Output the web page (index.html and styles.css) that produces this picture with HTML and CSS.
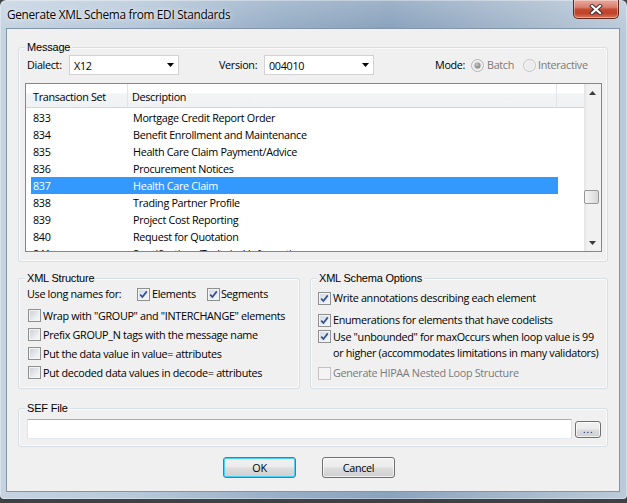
FILE: index.html
```html
<!DOCTYPE html>
<html>
<head>
<meta charset="utf-8">
<link rel="stylesheet" href="styles.css">
</head>
<body>
<div class="window">
  <div class="titlebar">
    <span class="title">Generate XML Schema from EDI Standards</span>
    <div class="close">
      <svg width="14" height="11" viewBox="0 0 14 11"><path d="M3 2 L11 9 M11 2 L3 9" stroke="#3b2b2b" stroke-width="4" stroke-linecap="square"/><path d="M3 2 L11 9 M11 2 L3 9" stroke="#ffffff" stroke-width="2.2" stroke-linecap="square"/></svg>
    </div>
  </div>
  <div class="client">
    <div class="group message">
      <div class="group-title">Message</div>
      <div class="msg-row">
        <span class="lbl lbl-dialect">Dialect:</span>
        <div class="combo"><span>X12</span><svg class="arrow" width="8" height="4" viewBox="0 0 8 4"><path d="M0 0 H7 L3.5 4 Z" fill="#000"/></svg></div>
        <span class="lbl lbl-version">Version:</span>
        <div class="combo"><span>004010</span><svg class="arrow" width="8" height="4" viewBox="0 0 8 4"><path d="M0 0 H7 L3.5 4 Z" fill="#000"/></svg></div>
        <span class="lbl lbl-mode">Mode:</span>
        <svg class="radio" width="13" height="13" viewBox="0 0 13 13"><defs><radialGradient id="rg" cx="0.4" cy="0.35" r="0.7"><stop offset="0" stop-color="#c4c4c4"/><stop offset="1" stop-color="#7f7f7f"/></radialGradient></defs><circle cx="6.5" cy="6.5" r="6" fill="#f2f2f2" stroke="#b4b4b4"/><circle cx="6.5" cy="6.5" r="4.2" fill="#e6e6e6"/><circle cx="6.5" cy="6.5" r="3" fill="url(#rg)"/></svg>
        <span class="lbl dis lbl-batch">Batch</span>
        <svg class="radio" width="13" height="13" viewBox="0 0 13 13"><circle cx="6.5" cy="6.5" r="6" fill="#f2f2f2" stroke="#c4c4c4"/><circle cx="6.5" cy="6.5" r="4.2" fill="#ececec"/></svg>
        <span class="lbl dis lbl-inter">Interactive</span>
      </div>
      <div class="listview">
        <div class="lv-main">
          <div class="lv-header">
            <div class="hc hc1">Transaction Set</div>
            <div class="hc hc2">Description</div>
            <div class="hc hc3"></div>
          </div>
          <div class="lv-rows">
            <div class="row"><span class="c1">833</span><span>Mortgage Credit Report Order</span></div>
            <div class="row"><span class="c1">834</span><span>Benefit Enrollment and Maintenance</span></div>
            <div class="row"><span class="c1">835</span><span>Health Care Claim Payment/Advice</span></div>
            <div class="row"><span class="c1">836</span><span>Procurement Notices</span></div>
            <div class="row sel"><span class="c1">837</span><span>Health Care Claim</span></div>
            <div class="row"><span class="c1">838</span><span>Trading Partner Profile</span></div>
            <div class="row"><span class="c1">839</span><span>Project Cost Reporting</span></div>
            <div class="row"><span class="c1">840</span><span>Request for Quotation</span></div>
            <div class="row"><span class="c1">841</span><span>Specifications/Technical Information</span></div>
          </div>
        </div>
        <div class="vscroll">
          <div class="sb-btn"><svg width="7" height="4" viewBox="0 0 7 4"><path d="M0 4 H7 L3.5 0 Z" fill="#3a3a3a"/></svg></div>
          <div class="sb-track"><div class="sb-thumb"></div></div>
          <div class="sb-btn"><svg width="7" height="4" viewBox="0 0 7 4"><path d="M0 0 H7 L3.5 4 Z" fill="#3a3a3a"/></svg></div>
        </div>
      </div>
    </div>

    <div class="opts">
      <div class="group xmlstruct">
        <div class="group-title">XML Structure</div>
        <div class="longnames">
          <span class="lbl lbl-use">Use long names for:</span>
          <span class="cb on"><svg width="9" height="9" viewBox="0 0 9 9"><path d="M1.2 4.6 L3.4 7 L7.8 1.4" fill="none" stroke="#2f4f94" stroke-width="1.7"/></svg></span>
          <span class="lbl lbl-elem">Elements</span>
          <span class="cb on"><svg width="9" height="9" viewBox="0 0 9 9"><path d="M1.2 4.6 L3.4 7 L7.8 1.4" fill="none" stroke="#2f4f94" stroke-width="1.7"/></svg></span>
          <span class="lbl lbl-seg">Segments</span>
        </div>
        <div class="chk first"><span class="cb"></span><span class="lbl">Wrap with "GROUP" and "INTERCHANGE" elements</span></div>
        <div class="chk"><span class="cb"></span><span class="lbl">Prefix GROUP_N tags with the message name</span></div>
        <div class="chk"><span class="cb"></span><span class="lbl">Put the data value in value= attributes</span></div>
        <div class="chk"><span class="cb"></span><span class="lbl">Put decoded data values in decode= attributes</span></div>
      </div>
      <div class="group schema">
        <div class="group-title">XML Schema Options</div>
        <div class="chk s1"><span class="cb on"><svg width="9" height="9" viewBox="0 0 9 9"><path d="M1.2 4.6 L3.4 7 L7.8 1.4" fill="none" stroke="#2f4f94" stroke-width="1.7"/></svg></span><span class="lbl">Write annotations describing each element</span></div>
        <div class="chk s2"><span class="cb on"><svg width="9" height="9" viewBox="0 0 9 9"><path d="M1.2 4.6 L3.4 7 L7.8 1.4" fill="none" stroke="#2f4f94" stroke-width="1.7"/></svg></span><span class="lbl">Enumerations for elements that have codelists</span></div>
        <div class="chk s3"><span class="cb on"><svg width="9" height="9" viewBox="0 0 9 9"><path d="M1.2 4.6 L3.4 7 L7.8 1.4" fill="none" stroke="#2f4f94" stroke-width="1.7"/></svg></span><span class="lbl">Use "unbounded" for maxOccurs when loop value is 99<br>or higher (accommodates limitations in many validators)</span></div>
        <div class="chk s4"><span class="cb disabled"></span><span class="lbl dis">Generate HIPAA Nested Loop Structure</span></div>
      </div>
    </div>

    <div class="group sef">
      <div class="group-title">SEF File</div>
      <div class="sef-row">
        <div class="textbox"></div>
        <div class="btn browse">...</div>
      </div>
    </div>

    <div class="buttons">
      <div class="btn push default">OK</div>
      <div class="btn push">Cancel</div>
    </div>
  </div>
</div>
</body>
</html>
```

FILE: styles.css
```css
* { box-sizing: border-box; }
html, body { margin: 0; padding: 0; }
body {
  width: 627px;
  height: 503px;
  overflow: hidden;
  background: #3f4144;
  font-family: "Open Sans", "Noto Sans", sans-serif;
  font-size: 10.8px;
  letter-spacing: -0.32px;
  color: #000;
}
.window {
  width: 627px;
  height: 499px;
  border-radius: 6px 6px 4px 4px;
  background:
    linear-gradient(180deg, rgba(255,255,255,0.18) 0px, rgba(255,255,255,0) 28px),
    linear-gradient(90deg, #c6d4e2 0%, #b6c8da 22%, #97aec6 45%, #8aa3bd 62%, #a4b7cb 82%, #bccbda 100%);
  padding: 0 7px 7px 6px;
  display: flex;
  flex-direction: column;
  box-shadow: inset 0 0 0 1px rgba(255,255,255,0.35);
}
.titlebar {
  height: 28px;
  display: flex;
  align-items: flex-start;
  justify-content: space-between;
}
.title {
  margin: 6px 0 0 1px;
  font-size: 11.8px;
  line-height: 16px;
  letter-spacing: -0.3px;
  color: #000;
  text-shadow: 0 0 6px rgba(255,255,255,0.9), 0 0 2px rgba(255,255,255,0.8);
}
.close {
  width: 46px;
  height: 19px;
  margin-right: 1px;
  border: 1px solid #5e2a24;
  border-top: none;
  border-radius: 0 0 5px 5px;
  background: linear-gradient(180deg, #e9aa9d 0%, #d9806f 40%, #c44a32 52%, #c0432c 75%, #dc7a55 100%);
  box-shadow: inset 0 0 0 1px rgba(255,255,255,0.35);
  display: flex;
  align-items: center;
  justify-content: center;
}
.client {
  width: 614px;
  height: 464px;
  background: #f0f0f0;
  border: 1px solid #8294a8;
  display: flex;
  flex-direction: column;
}
.group {
  border: 1px solid #d5dfe5;
  border-radius: 3px;
  box-shadow: inset 0 0 0 1px #fbfbfb;
  display: flex;
  flex-direction: column;
}
.group-title {
  align-self: flex-start;
  margin: -8px 0 0 6px;
  padding: 0 2px;
  background: #f0f0f0;
  line-height: 14px;
  font-family: "Liberation Sans", Arial, sans-serif;
  font-size: 11px;
  letter-spacing: -0.2px;
}
.lbl { line-height: 16px; white-space: nowrap; }
.dis { color: #7a7a7a; }

/* Message */
.message { margin: 18px 0 0 11px; width: 590px; height: 215px; }
.msg-row { margin-top: 1px; height: 20px; display: flex; align-items: center; }
.lbl-dialect { margin-left: 8px; width: 42px; }
.lbl-version { margin-left: 40px; width: 45px; }
.lbl-mode { margin-left: 61px; width: 36px; }
.lbl-batch { margin-left: 3px; width: 36px; }
.lbl-inter { margin-left: 2px; }
.combo {
  width: 110px;
  height: 20px;
  background: #fff;
  border: 1px solid #d2d2d2;
  padding-left: 4px;
  display: flex;
  align-items: center;
}
.combo .arrow { margin-left: auto; margin-right: 3px; }
.radio { flex: none; }

.listview {
  margin: 8px 0 0 6px;
  width: 577px;
  height: 169px;
  border: 1px solid #828790;
  background: #fff;
  display: flex;
}
.lv-main { width: 558px; overflow: hidden; display: flex; flex-direction: column; }
.lv-header {
  height: 24px;
  flex: none;
  display: flex;
  background: linear-gradient(180deg, #ffffff 0%, #ffffff 40%, #f2f3f5 42%, #f1f2f4 100%);
  border-bottom: 1px solid #d5d5d5;
}
.hc { line-height: 23px; padding-top: 1px; }
.hc1 { width: 102px; padding-left: 7px; border-right: 1px solid #e3e4e6; }
.hc2 { width: 429px; padding-left: 4px; border-right: 1px solid #e3e4e6; }
.hc3 { flex: 1; }
.lv-rows { margin-top: 1px; }
.row {
  height: 17px;
  line-height: 17px;
  margin-left: 5px;
  width: 527px;
  display: flex;
  white-space: nowrap;
}
.row .c1 { width: 102px; padding-left: 2px; }
.row.sel { background: #3399ff; color: #fff; }

.vscroll {
  width: 17px;
  display: flex;
  flex-direction: column;
  background: linear-gradient(90deg, #e3e3e3 0%, #f1f1f1 20%, #f1f1f1 100%);
}
.sb-btn { height: 17px; display: flex; align-items: center; justify-content: center; }
.sb-track { flex: 1; }
.sb-thumb {
  margin: 89px 0 0 0;
  width: 15px;
  height: 14px;
  border: 1px solid #979797;
  border-radius: 2px;
  background: linear-gradient(90deg, #f4f4f4 0%, #e4e4e4 60%, #d6d6d6 100%);
}

/* options */
.opts { display: flex; margin: 16px 0 0 11px; gap: 10px; }
.xmlstruct { width: 282px; height: 111px; }
.schema { width: 298px; height: 111px; }
.longnames { margin-top: 1px; height: 16px; display: flex; align-items: center; padding-left: 8px; }
.lbl-use { width: 110px; }
.lbl-elem { width: 55px; margin-left: 2px; }
.lbl-seg { margin-left: 1px; }
.chk { display: flex; align-items: center; height: 19px; padding-left: 9px; }
.chk .cb { margin-right: 2px; }
.chk.first { margin-top: 4px; }
.schema .chk { padding-left: 7px; height: 18px; }
.chk.s1 { margin-top: 4px; }
.chk.s2 { margin-top: 4px; }
.chk.s3 { height: auto; align-items: flex-start; }
.chk.s3 .cb { margin-top: 1px; }
.chk.s3 .lbl { line-height: 15.5px; }
.chk.s4 { margin-top: 4px; }
.cb {
  flex: none;
  width: 13px;
  height: 13px;
  border: 1px solid #8e8f8f;
  background: linear-gradient(135deg, #c9cdd3 0%, #eef0f2 70%, #f7f7f7 100%);
  box-shadow: inset 0 0 0 1px #f4f4f4;
  display: flex;
  align-items: center;
  justify-content: center;
}
.cb.on { background: linear-gradient(135deg, #d2d8e2 0%, #f0f2f6 80%); }
.cb.disabled { border-color: #c2c2c2; background: #f4f4f4; box-shadow: none; }

/* SEF */
.sef { margin: 19px 0 0 11px; width: 590px; height: 39px; }
.sef-row { margin-top: 4px; display: flex; align-items: flex-start; }
.textbox {
  margin-left: 8px;
  width: 545px;
  height: 20px;
  background: #fff;
  border: 1px solid;
  border-color: #abadb3 #dbdfe6 #e3e9ef #e2e3ea;
}
.btn {
  border: 1px solid #707070;
  border-radius: 3px;
  background: linear-gradient(180deg, #f2f2f2 0%, #ebebeb 48%, #dddddd 52%, #cfcfcf 100%);
  box-shadow: inset 0 0 0 1px rgba(255,255,255,0.7);
  display: flex;
  align-items: center;
  justify-content: center;
}
.browse {
  margin: 2px 0 0 3px;
  width: 26px;
  height: 17px;
  color: #1b1b6b;
  font-family: "Liberation Sans", sans-serif;
  font-size: 11px;
  letter-spacing: 0.5px;
  line-height: 15px;
}
.buttons { display: flex; gap: 26px; margin-top: 10px; padding-left: 216px; }
.push { width: 73px; height: 21px; }
.push.default { border-color: #3c7fb1; box-shadow: inset 0 0 0 1px #48d0f8; }
```
